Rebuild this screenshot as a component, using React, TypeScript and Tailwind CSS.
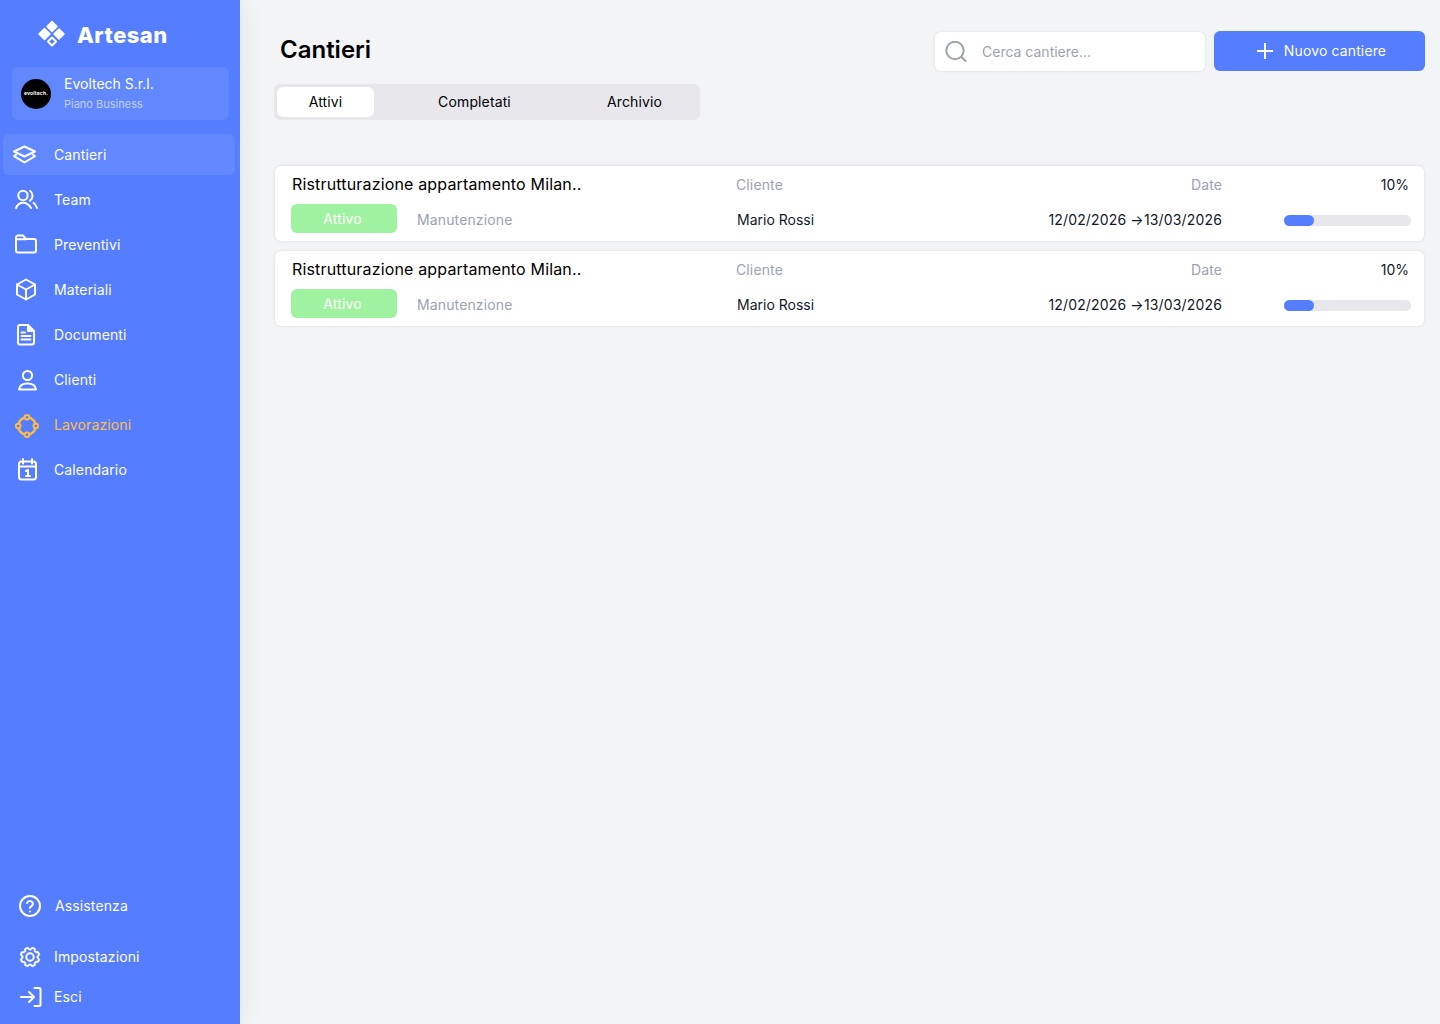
import React from "react";
import { PiGear } from "react-icons/pi";

function Logo() {
  return (
    <svg width="28" height="28" viewBox="0 0 28 28" fill="white" stroke="white" strokeLinejoin="round">
      <path d="M14 1.5 L19 6.5 L14 11.5 L9 6.5 Z" strokeWidth="1.5" />
      <path d="M6.5 8.5 L12 14 L6.5 19.5 L1 14 Z" strokeWidth="1.5" />
      <path d="M21 9 L26 14 L21 19 L16 14 Z" strokeWidth="1.5" />
      <path d="M14 17.5 L18 21.5 L14 25.5 L10 21.5 Z" fill="none" strokeWidth="2" />
    </svg>
  );
}

function Ico({ children, color = "white" }: { children: React.ReactNode; color?: string }) {
  return (
    <svg width="28" height="28" viewBox="0 0 28 28" fill="none" stroke={color} strokeWidth="2" strokeLinecap="round" strokeLinejoin="round">
      {children}
    </svg>
  );
}

const items: { label: string; icon: React.ReactNode; active?: boolean; orange?: boolean }[] = [
  {
    label: "Cantieri",
    active: true,
    icon: (
      <Ico>
        <path d="M12.5 5.5 L23 10.5 L12.5 15.5 L2 10.5 Z" />
        <path d="M4 13.8 L2 15.2 L12.5 21.5 L23 15.2 L21 13.8" />
      </Ico>
    ),
  },
  {
    label: "Team",
    icon: (
      <Ico>
        <circle cx="11" cy="9.5" r="4.7" />
        <path d="M18 4.8 A6 6 0 0 1 18 14.6" />
        <path d="M4 22 C5.5 18.5 8 16.8 11 16.8 S17 18.5 19 22" />
        <path d="M21.5 16.8 C23 18 24.3 20 25 22" />
      </Ico>
    ),
  },
  {
    label: "Preventivi",
    icon: (
      <Ico>
        <path d="M4 6.5 a2 2 0 0 1 2-2 H11 L14 8 H22 a2 2 0 0 1 2 2 V19.5 a2 2 0 0 1-2 2 H6 a2 2 0 0 1-2-2 Z" />
        <path d="M4 8.2 H14" />
      </Ico>
    ),
  },
  {
    label: "Materiali",
    icon: (
      <Ico>
        <path d="M14 3.5 L23 8.5 V18.5 L14 23.5 L5 18.5 V8.5 Z" />
        <path d="M5 8.5 L14 13.5 L23 8.5 M14 13.5 V23.5" />
      </Ico>
    ),
  },
  {
    label: "Documenti",
    icon: (
      <Ico>
        <path d="M16 4 H8 a2 2 0 0 0-2 2 V21.5 a2 2 0 0 0 2 2 H20 a2 2 0 0 0 2-2 V10 Z" />
        <path d="M16 4 V10 H22" fill="white" />
        <path d="M9.5 11.5 H13 M9.5 15 H18.5 M9.5 18.5 H18.5" />
      </Ico>
    ),
  },
  {
    label: "Clienti",
    icon: (
      <Ico>
        <circle cx="15.5" cy="9.5" r="4.6" />
        <path d="M7 23.5 C7.5 19.5 11 17.5 15.5 17.5 S23.5 19.5 24 23.5 Z" />
      </Ico>
    ),
  },
  {
    label: "Lavorazioni",
    orange: true,
    icon: (
      <Ico color="#FFBB45">
        <circle cx="15" cy="15" r="8.8" strokeWidth="2.4" />
        <circle cx="15" cy="6.2" r="2.3" fill="#547DFF" />
        <circle cx="15" cy="23.8" r="2.3" fill="#547DFF" />
        <circle cx="6.2" cy="15" r="2.3" fill="#547DFF" />
        <circle cx="23.8" cy="15" r="2.3" fill="#547DFF" />
      </Ico>
    ),
  },
  {
    label: "Calendario",
    icon: (
      <Ico>
        <rect x="7" y="5.5" width="17" height="18" rx="2.5" />
        <path d="M11 3 V7.5 M20 3 V7.5 M7 10.5 H24" />
        <path d="M14 15 L16 14 V20 M14 20 H18" />
      </Ico>
    ),
  },
];

function NavItem({ label, icon, active, orange }: { label: string; icon: React.ReactNode; active?: boolean; orange?: boolean }) {
  return (
    <div className={`flex h-[41px] items-center rounded-md pl-[9px] text-sm ${active ? "bg-[#6288FF]" : ""} ${orange ? "text-[#FFBB45]" : "text-white"}`}>
      <span className="flex w-[42px] shrink-0 items-center justify-start">{icon}</span>
      {label}
    </div>
  );
}

function Card() {
  return (
    <div className="flex h-[75px] flex-col justify-between rounded-md bg-white pb-2 pl-[17px] pr-[13px] pt-2 shadow-[0_0_3px_rgba(0,0,0,0.12)]">
      <div className="flex h-5 items-center text-sm">
        <span className="w-[444px] text-base tracking-[0.01em] text-black">Ristrutturazione appartamento Milan..</span>
        <span className="w-[200px] pt-[2px] text-[#9CA3AF]">Cliente</span>
        <span className="w-[286px] pt-[2px] text-right text-[#9CA3AF]">Date</span>
        <span className="w-[187px] pt-[2px] text-right tracking-normal text-[#111827]">10%</span>
      </div>
      <div className="flex h-[29px] items-center text-sm">
        <span className="-ml-px flex h-[29px] w-[106px] items-center justify-center rounded-md bg-[#9FF29F] pr-[3px] text-white">Attivo</span>
        <span className="ml-5 w-[320px] pt-[2px] text-[#9CA3AF]">Manutenzione</span>
        <span className="w-[200px] pt-[2px] tracking-normal text-[#111827]">Mario Rossi</span>
        <span className="w-[285px] pt-[2px] text-right tracking-[0.16px] text-[#111827]">12/02/2026 →13/03/2026</span>
        <div className="ml-[62px] mt-[4px] h-[11px] w-[127px] rounded-full bg-[#E7E7EC]">
          <div className="h-[11px] w-[30px] rounded-full bg-[#547DFF]" />
        </div>
      </div>
    </div>
  );
}

export default function App() {
  return (
    <div className="flex h-[1024px] w-[1440px] overflow-hidden bg-[#F3F4F6] font-['Inter',sans-serif] tracking-[0.008em]">
      <aside className="relative z-10 flex w-[240px] shrink-0 flex-col bg-[#547DFF] shadow-[0_0_24px_rgba(0,0,0,0.08)]">
        <div className="flex h-[48px] items-end pl-[38px]">
          <Logo />
          <span className="mb-[-1px] ml-[11px] text-[22px] font-extrabold leading-[28px] tracking-[0.02em] text-white">Artesan</span>
        </div>
        <div className="ml-3 mt-[19px] flex h-[53px] w-[217px] items-center rounded-md bg-[#6288FF] pl-[9px]">
          <div className="flex h-[30px] w-[30px] items-center justify-center rounded-full bg-black text-[5px] font-bold text-white">evoltech.</div>
          <div className="ml-[13px] -mt-px">
            <div className="text-sm leading-5 tracking-normal text-white">Evoltech S.r.l.</div>
            <div className="mt-[2px] text-[11px] leading-4 tracking-normal text-white/60">Piano Business</div>
          </div>
        </div>
        <nav className="ml-[3px] mr-[5px] mt-[14px] flex flex-col gap-1">
          {items.map((i) => (
            <NavItem key={i.label} {...i} />
          ))}
        </nav>
        <div className="mt-auto flex flex-col pb-[7px] pl-[18px] text-sm text-white">
          <div className="flex h-10 items-center">
            <span className="w-[37px]">
              <svg width="24" height="24" viewBox="0 0 24 24" fill="none" stroke="white" strokeWidth="2" strokeLinecap="round" strokeLinejoin="round">
                <circle cx="12" cy="12" r="10" />
                <path d="M9.1 9 a3 3 0 0 1 5.8 1 c0 2-3 2.6-3 4" />
                <path d="M12 17.5 h.01" />
              </svg>
            </span>
            Assistenza
          </div>
          <div className="mt-[11px] flex h-10 items-center">
            <span className="w-[36px]">
              <PiGear size={24} stroke="white" strokeWidth={5} />
            </span>
            Impostazioni
          </div>
          <div className="flex h-10 items-center">
            <span className="flex w-[36px] pl-[2px]">
              <svg width="22" height="20" viewBox="0 0 22 20" fill="none" stroke="white" strokeWidth="2" strokeLinecap="round" strokeLinejoin="round">
                <path d="M1 10 H14 M9 5 L14 10 L9 15" />
                <path d="M14.5 1 H19 a1.5 1.5 0 0 1 1.5 1.5 V17.5 a1.5 1.5 0 0 1-1.5 1.5 H14.5" />
              </svg>
            </span>
            Esci
          </div>
        </div>
      </aside>
      <main className="flex-1 pl-[34px] pr-[15px] pt-[31px]">
        <div className="flex items-start justify-between">
          <div>
            <h1 className="ml-[6px] text-2xl font-semibold leading-[38px] tracking-normal text-black">Cantieri</h1>
            <div className="mt-[15px] flex h-9 w-[426px] items-center rounded-md bg-[#E7E7EC] pl-[3px] text-sm text-black">
              <div className="flex h-[30px] w-[97px] items-center justify-center rounded-md bg-white">Attivi</div>
              <div className="w-[201px] text-center">Completati</div>
              <div className="w-[119px] text-center">Archivio</div>
            </div>
          </div>
          <div className="flex gap-[9px]">
            <div className="mt-px flex h-[39px] w-[270px] items-center rounded-md bg-white pl-[10px] text-sm tracking-normal text-[#9CA3AF] shadow-[0_0_3px_rgba(0,0,0,0.1)]">
              <svg width="22" height="22" viewBox="0 0 22 22" fill="none" stroke="#9CA3AF" strokeWidth="2" strokeLinecap="round">
                <circle cx="10" cy="9.5" r="8.7" />
                <path d="M16.5 16 L20.5 20" />
              </svg>
              <span className="ml-[15px] pt-px">Cerca cantiere...</span>
            </div>
            <div className="flex h-10 w-[211px] items-center justify-center gap-[10px] rounded-md bg-[#547DFF] pl-[3px] text-sm text-white">
              <svg width="18" height="18" viewBox="0 0 18 18" fill="none" stroke="white" strokeWidth="2">
                <path d="M9 1 V17 M1 9 H17" />
              </svg>
              Nuovo cantiere
            </div>
          </div>
        </div>
        <div className="ml-px mr-px mt-[46px] flex flex-col gap-[10px]">
          <Card />
          <Card />
        </div>
      </main>
    </div>
  );
}
